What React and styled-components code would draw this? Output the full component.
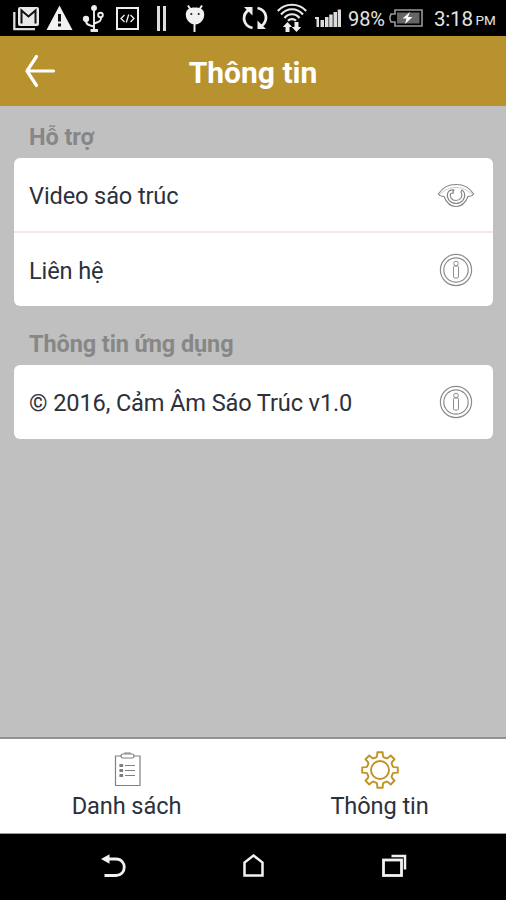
import React from "react";
import styled, { createGlobalStyle } from "styled-components";

const GlobalStyle = createGlobalStyle`
  * { box-sizing: border-box; }
  body { margin: 0; background: #000; }
`;

const Screen = styled.div`
  width: 506px;
  height: 900px;
  display: flex;
  flex-direction: column;
  overflow: hidden;
  background: #c0c0c0;
  font-family: Roboto, "Noto Sans", sans-serif;
  color: #2c313b;
`;

const StatusBar = styled.div`
  height: 36px;
  flex: none;
  display: flex;
  align-items: flex-start;
  background: #000;
  color: #e4e4e4;
`;

const Icon = styled.svg`
  display: block;
  flex: none;
  margin-left: ${(p) => p.$left || 0}px;
  margin-top: ${(p) => p.$top || 0}px;
  overflow: visible;
`;

const StatusText = styled.span`
  width: ${(p) => p.$width}px;
  margin-left: ${(p) => p.$left}px;
  margin-top: ${(p) => p.$top || 0}px;
  font-size: ${(p) => p.$size}px;
  line-height: 38px;
  letter-spacing: ${(p) => p.$spacing || 0}px;
  white-space: nowrap;
`;

const Header = styled.header`
  height: 70px;
  flex: none;
  display: grid;
  grid-template-columns: 80px 1fr 80px;
  align-items: center;
  background: #b8922f;
  color: #fff;
`;

const BackButton = styled.button`
  padding: 0 0 0 25px;
  border: 0;
  background: none;
  color: inherit;
`;

const Title = styled.h1`
  margin: 3px 0 0;
  text-align: center;
  font-size: 30px;
  line-height: 36px;
  font-weight: 700;
`;

const Content = styled.main`
  flex: 1;
  padding: 0 13px 0 14px;
`;

const SectionTitle = styled.h2`
  height: ${(p) => p.$height}px;
  margin: 0;
  padding: 0 0 7px 15px;
  display: flex;
  align-items: flex-end;
  font-size: 23.5px;
  line-height: 28px;
  font-weight: 700;
  letter-spacing: -0.1px;
  color: #878787;
`;

const Card = styled.section`
  border-radius: 6px;
  background: #fff;
  overflow: hidden;
`;

const Row = styled.div`
  height: ${(p) => p.$height}px;
  padding: 0 18px 0 15px;
  display: flex;
  align-items: center;
  justify-content: space-between;
  border-bottom: ${(p) => (p.$divided ? "2px solid #ffe2e6" : "0")};
`;

const RowLabel = styled.span`
  padding-top: 2px;
  font-size: 23.6px;
  line-height: 30px;
  letter-spacing: -0.13px;
  white-space: nowrap;
`;

const TabBar = styled.nav`
  height: 97px;
  flex: none;
  display: grid;
  grid-template-columns: 1fr 1fr;
  border-top: 2px solid #929292;
  border-bottom: 1px solid #999;
  background: #fff;
`;

const Tab = styled.a`
  display: flex;
  flex-direction: column;
  align-items: center;
  padding-top: 11px;
  color: inherit;
`;

const TabLabel = styled.span`
  margin-top: 1px;
  font-size: 23.6px;
  line-height: 30px;
  letter-spacing: -0.1px;
`;

const NavBar = styled.footer`
  height: 66px;
  flex: none;
  display: flex;
  background: #000;
`;

const GEAR = (() => {
  const profile = [[-15, 13.3], [-11.5, 14.5], [-8.5, 18], [8.5, 18], [11.5, 14.5], [15, 13.3]];
  const points = [];
  for (let tooth = 0; tooth < 8; tooth += 1) {
    profile.forEach(([angle, radius]) => {
      const a = ((tooth * 45 + angle) * Math.PI) / 180;
      points.push(`${(20 + radius * Math.sin(a)).toFixed(2)} ${(20 - radius * Math.cos(a)).toFixed(2)}`);
    });
  }
  return `M${points.join("L")}Z`;
})();

function InfoIcon() {
  return (
    <Icon width="38" height="34" viewBox="0 0 38 34" fill="none" stroke="#8c8c8c">
      <circle cx="19" cy="17" r="15.6" strokeWidth="1.2" />
      <circle cx="19" cy="17" r="12.2" strokeWidth="1.2" />
      <circle cx="19" cy="10.500" r="2.300" />
      <rect x="16.500" y="13" width="5" height="12" rx="1.200" />
    </Icon>
  );
}

function EyeIcon() {
  return (
    <Icon width="38" height="26" viewBox="0 0 38 26" fill="none" stroke="#858585" strokeWidth="1.1" strokeLinejoin="round" strokeLinecap="round">
      <path d="M1.300 12C5 6 11 2.500 19 2.500S33 6 36.700 12C35 14.300 33 14.500 31 14.500 28.500 21 25 24.500 19 24.500S9.500 21 7 14.500C5 14.500 3 14.300 1.300 12Z" />
      <path d="M2 12.500C8 7.500 13 5.500 19 5.500s11 2 17 7" stroke="#b5b5b5" strokeWidth=".7" />
      <path d="M10.500 11.500C9.500 17 13.500 21.500 19 21.500S28.500 17 27.500 11.500C27 9.500 26 8.500 25 8l-1 2c2.500 4.500-1 8.500-5 8.500-4.500 0-6.500-3.500-5.500-7l3-.5c-1-1-.500-2 .5-3-3-.5-5.500 1-6.500 3.500Z" />
    </Icon>
  );
}

export default function App() {
  return (
    <>
      <GlobalStyle />
      <Screen>
        <StatusBar>
          <Icon $left={13} $top={6} width="26" height="25" viewBox="0 0 26 25">
            <path d="M1.300 6v17.200H22" fill="none" stroke="#ddd" strokeWidth="2.300" />
            <rect x="5" y="1" width="21" height="19" rx="2" fill="#e9e9e9" />
            <path d="M8.500 17.500V4.500l7 6 7-6v13" fill="none" stroke="#111" strokeWidth="2" />
          </Icon>
          <Icon $left={7} $top={5} width="27" height="25" viewBox="0 0 27 25">
            <path d="M13.500.5 26.500 25H.5Z" fill="#f2f2f2" />
            <path d="M13.500 9v7.500M13.500 18.500v3" stroke="#111" strokeWidth="3" />
          </Icon>
          <Icon $left={10} $top={5} width="21" height="27" viewBox="0 0 21 27" fill="none" stroke="#eee" strokeWidth="1.900">
            <path d="M11 3v22M3 15v1c0 4 4 4.500 8 5.500M18 12v1c0 4-3 4-7 5.500" />
            <circle cx="11" cy="3" r="2" fill="#eee" />
            <path d="M8.500 25h5.500v1H8.500Z" fill="#eee" />
            <circle cx="3" cy="14" r="2.200" fill="#eee" />
            <circle cx="17.500" cy="10" r="2.300" />
          </Icon>
          <Icon $left={12} $top={7} width="23" height="23" viewBox="0 0 23 23" fill="none" stroke="#eee">
            <rect x="1" y="1" width="21" height="21" strokeWidth="2" />
            <path d="m8.500 8-3.500 3.500L8.500 15M14.500 8l3.500 3.500-3.500 3.500M12.700 7.500l-2.400 8" strokeWidth="1.300" />
          </Icon>
          <Icon $left={18} $top={6} width="9" height="25" viewBox="0 0 9 25">
            <path d="M0 0h3v25H0ZM6 0h3v25H6Z" fill="#ddd" />
          </Icon>
          <Icon $left={19} $top={5} width="20" height="27" viewBox="0 0 20 27">
            <path d="M3 .5 6 5M17 .5 14 5M9.500 17v10" stroke="#eee" strokeWidth="2" />
            <path d="M.800 9.500C.800 5 4 2.500 10 2.500S19.200 5 19.200 9.500C19.200 15 15 19.500 10 19.500S.8 15 .8 9.500Z" fill="#f1f1f1" />
            <circle cx="6.300" cy="9" r="1.100" fill="#222" />
            <circle cx="13.700" cy="9" r="1.100" fill="#222" />
          </Icon>
          <Icon $left={38} $top={6} width="24" height="24" viewBox="0 0 24 24">
            <path d="M9.500 22C-.5 19.500-1.500 9 6 3.500M14.500 2C24.500 4.500 25.500 15 18 20.500" fill="none" stroke="#eee" strokeWidth="2.800" />
            <path d="M1 1h8.500v8.500ZM23 23h-8.500v-8.500Z" fill="#eee" />
          </Icon>
          <Icon $left={10} $top={4} width="30" height="29" viewBox="0 0 30 29">
            <path d="M.8 7C8-1.300 22-1.300 29.200 7M4 10.500c6-7 16-7 22 0M7.500 14c4-5 11-5 15 0M11 16.700c2-2.200 6-2.200 8 0" fill="none" stroke="#e8e8e8" strokeWidth="2.200" />
            <path d="m10.500 18 4.700 5h-2.700v5H8.500v-5H5.800ZM19.500 28l4.700-5h-2.700v-5h-4v5h-2.700Z" fill="#eee" />
          </Icon>
          <Icon $left={8} $top={9} width="26" height="18" viewBox="0 0 26 18">
            <path d="M0 8h4v10H1.500v-8H0ZM5.500 11h3.500v7H5.500ZM10 8h3.500v10H10ZM14.200 5.500h3.500V18h-3.500ZM18.500 3h3.500v15h-3.500ZM22.700.5h3.300V18h-3.300Z" fill="#dcdcdc" />
          </Icon>
          <StatusText $left={7} $width={41} $size={20} $spacing={-0.1}>98%</StatusText>
          <Icon $left={0} $top={9} width="34" height="18" viewBox="0 0 34 18">
            <path d="M6 1h27v16H6v-4H2l-1-3V8l1-3h4Z" fill="none" stroke="#999" strokeWidth="1.600" />
            <path d="M8 3.500h22.500v11H8Z" fill="#656565" />
            <path d="m21 3-7.500 6.500h4L16 15l7.500-7H19Z" fill="#fff" />
          </Icon>
          <StatusText $left={11} $width={41.5} $size={20.5} $spacing={-0.2}>3:18</StatusText>
          <StatusText $left={0} $top={1} $width={25} $size={13.5}>PM</StatusText>
        </StatusBar>

        <Header>
          <BackButton aria-label="Back">
            <Icon width="30" height="34" viewBox="0 0 30 34" fill="none" stroke="#fff" strokeWidth="3.200" strokeLinecap="round" strokeLinejoin="round">
              <path d="M28.500 17H2M11.500 2.500 2 17l9.500 14.500" />
            </Icon>
          </BackButton>
          <Title>Thông tin</Title>
        </Header>

        <Content>
          <SectionTitle $height={52}>Hỗ trợ</SectionTitle>
          <Card>
            <Row $height={75} $divided>
              <RowLabel>Video sáo trúc</RowLabel>
              <EyeIcon />
            </Row>
            <Row $height={73}>
              <RowLabel>Liên hệ</RowLabel>
              <InfoIcon />
            </Row>
          </Card>
          <SectionTitle $height={59}>Thông tin ứng dụng</SectionTitle>
          <Card>
            <Row $height={74}>
              <RowLabel>© 2016, Cảm Âm Sáo Trúc v1.0</RowLabel>
              <InfoIcon />
            </Row>
          </Card>
        </Content>

        <TabBar>
          <Tab>
            <Icon width="40" height="40" viewBox="0 0 40 40" fill="none" stroke="#808080" strokeWidth="1.200">
              <path d="M14.500 6H8.500v29.500h24.500V6h-6" />
              <rect x="14" y="4" width="13" height="4" rx="1.800" />
              <path d="M18 4V3h5v1M18 15.500h10M18 20.500h10M18 25.500h10" />
              <path d="M13 14.500h2.500v2H13ZM13 19.500h2.500v2H13ZM13 24.500h2.500v2H13Z" fill="#777" />
            </Icon>
            <TabLabel>Danh sách</TabLabel>
          </Tab>
          <Tab>
            <Icon width="40" height="40" viewBox="0 0 40 40" fill="none" stroke="#c19225" strokeWidth="1.900" strokeLinejoin="round">
              <path d={GEAR} />
              <circle cx="20" cy="20" r="9" />
            </Icon>
            <TabLabel>Thông tin</TabLabel>
          </Tab>
        </TabBar>

        <NavBar>
          <Icon $left={101} $top={20} width="25" height="24" viewBox="0 0 25 24">
            <path d="M5 5h10c11 0 11 16.500 0 16.500H3.500" fill="none" stroke="#f2f2f2" strokeWidth="2.800" />
            <path d="M0 5 8.500.3v9.400Z" fill="#f2f2f2" />
          </Icon>
          <Icon $left={117} $top={20} width="21" height="23" viewBox="0 0 21 23">
            <path d="M1.500 21.500V8.500l9-7 9 7v13Z" fill="none" stroke="#f2f2f2" strokeWidth="2.500" />
          </Icon>
          <Icon $left={118} $top={20} width="25" height="23" viewBox="0 0 25 23" fill="none" stroke="#f2f2f2">
            <rect x="1.500" y="6" width="18" height="15.500" strokeWidth="2.800" />
            <path d="M9.500 2H23v13.500" strokeWidth="2.500" />
          </Icon>
        </NavBar>
      </Screen>
    </>
  );
}
